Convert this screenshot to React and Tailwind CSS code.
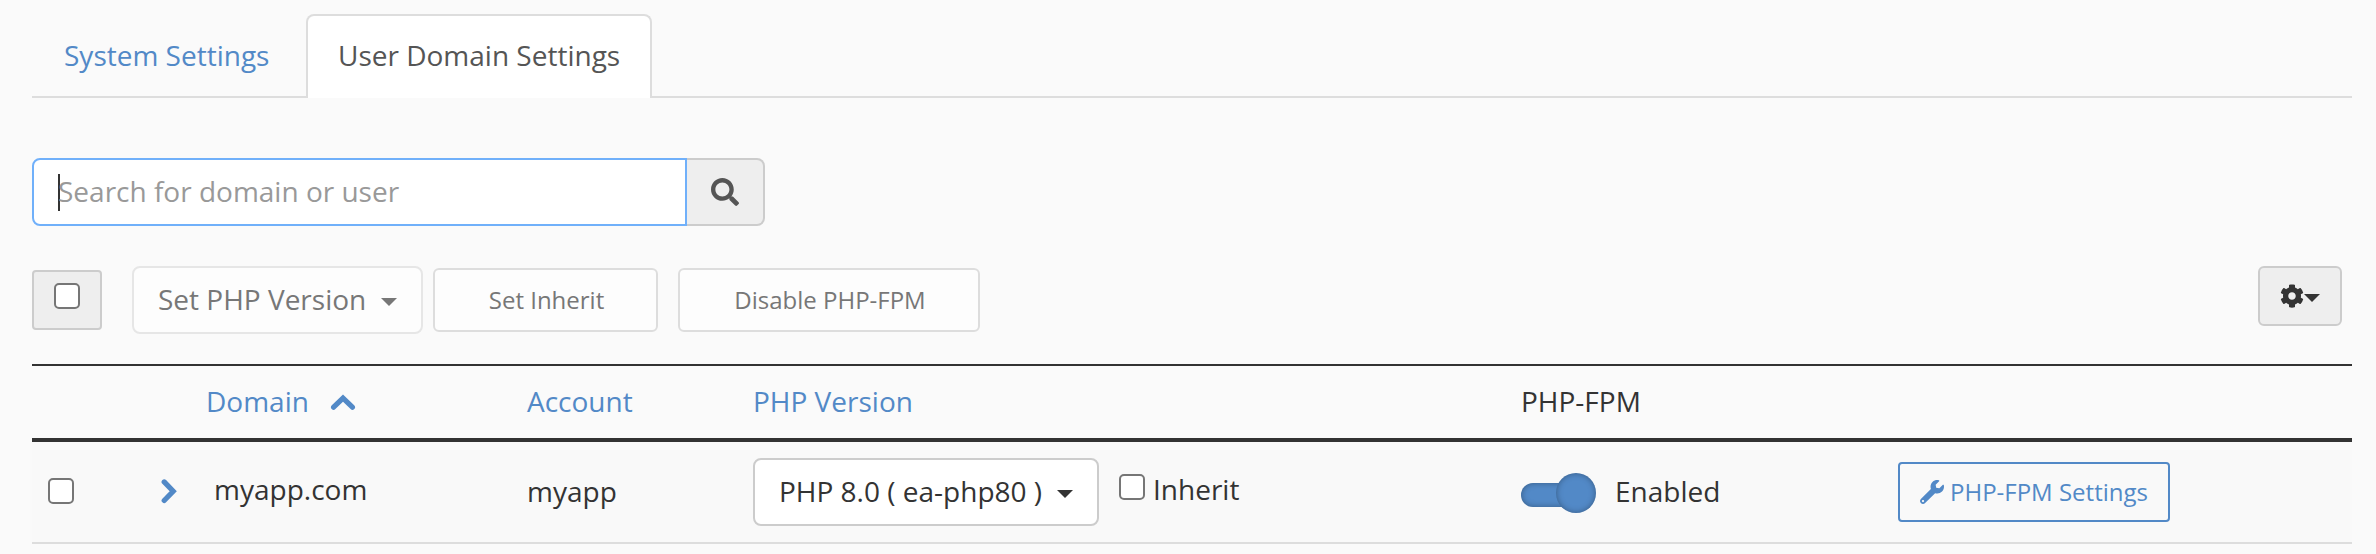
import { FaSearch, FaCog, FaWrench } from "react-icons/fa";

function Caret({ className = "" }) {
  return <span className={"block h-0 w-0 border-x-8 border-t-8 border-x-transparent border-t-current " + className} />;
}

function Box({ className = "" }) {
  return <span role="checkbox" aria-checked="false" className={"block size-[26px] shrink-0 rounded-[5px] border-2 border-[#767676] bg-white " + className} />;
}

function Tabs() {
  return (
    <nav className="flex h-[84px] shadow-[inset_0_-2px_0_#dddddd]">
      <a className="w-[274px] pl-8 pt-[21px] leading-10 text-[#5289c7]">System Settings</a>
      <a className="w-[346px] rounded-t-lg border-2 border-b-0 border-[#dddddd] bg-white pl-[30px] pt-[19px] leading-10 text-[#555555]">
        User Domain Settings
      </a>
    </nav>
  );
}

function Search() {
  return (
    <div className="mt-[60px] flex h-[68px]">
      <div className="flex w-[655px] items-center rounded-l-lg border-2 border-[#70b0fa] bg-white pl-6 text-[#999999]">
        <span className="-mr-0.5 h-[37px] w-0.5 bg-[#333333]" />
        <span className="pb-0.5 leading-10">Search for domain or user</span>
      </div>
      <button className="flex w-[78px] items-center justify-center rounded-r-lg border-2 border-l-0 border-[#cccccc] bg-[#eeeeee] pb-px">
        <FaSearch className="size-7 text-[#555555]" />
      </button>
    </div>
  );
}

function Toolbar() {
  return (
    <div className="mt-10 flex h-[98px] items-start text-[#777777]">
      <div className="mt-1 flex h-[60px] w-[70px] justify-center rounded border-2 border-[#cccccc] bg-[#eeeeee] pt-[11px]">
        <Box />
      </div>
      <button className="ml-[30px] flex h-[68px] w-[291px] items-center rounded-lg border-2 border-[#e6e6e6] bg-[#fdfdfd] pb-0.5 pl-6 leading-10">
        Set PHP Version
        <Caret className="ml-[15px] mt-1.5" />
      </button>
      <button className="ml-[10px] mt-0.5 h-16 w-[225px] rounded-md border-2 border-[#dddddd] bg-[#fdfdfd] pl-0.5 text-2xl">Set Inherit</button>
      <button className="ml-5 mt-0.5 h-16 w-[302px] rounded-md border-2 border-[#dddddd] bg-[#fdfdfd] pl-0.5 text-2xl">Disable PHP-FPM</button>
      <button className="ml-auto mr-[10px] flex h-[60px] w-[84px] items-center rounded-md border-2 border-[#cccccc] bg-[#eeeeee] pl-5 text-[#333333]">
        <FaCog className="size-6" />
        <Caret className="mt-[3px]" />
      </button>
    </div>
  );
}

const columns = "grid grid-cols-[174px_321px_226px_768px_377px_1fr]";

function Table() {
  return (
    <div className="text-[#333333]">
      <div className={columns + " h-[78px] border-b-4 border-t-2 border-[#333333] pt-[15px] leading-10 text-[#5289c7]"}>
        <span />
        <span className="flex">
          Domain
          <svg viewBox="0 0 26 18" className="ml-[21px] mt-[13px] h-[18px] w-[26px]" fill="none" stroke="currentColor" strokeWidth="5.2" strokeLinecap="round">
            <path d="M3.6 13.2 13 4.2l9.4 9" />
          </svg>
        </span>
        <span>Account</span>
        <span>PHP Version</span>
        <span className="text-[#333333]">PHP-FPM</span>
        <span />
      </div>
      <div className={columns + " h-[102px] border-b-2 border-[#dddddd] bg-[#f9f9f9] leading-10"}>
        <div className="flex pl-4">
          <Box className="mt-9" />
          <svg viewBox="0 0 18 26" className="ml-[86px] mt-[36px] h-[26px] w-[18px]" fill="none" stroke="currentColor" strokeWidth="5.2" strokeLinecap="round">
            <path className="text-[#5289c7]" stroke="#5289c7" d="M4.2 3.9 13.2 13.2l-9 9.3" />
          </svg>
        </div>
        <span className="pl-2 pt-[27px]">myapp.com</span>
        <span className="pt-[29px]">myapp</span>
        <div className="flex pt-4">
          <button className="flex h-[68px] w-[346px] items-center rounded-lg border-2 border-[#cccccc] bg-white pb-0.5 pl-6">
            PHP 8.0 ( ea-php80 )
            <Caret className="ml-[15px] mt-1.5" />
          </button>
          <Box className="ml-5 mt-4" />
          <span className="ml-2 mt-[11px]">Inherit</span>
        </div>
        <div className="flex">
          <div className="mt-[31px] flex h-10 w-[75px] items-center">
            <span className="mt-1 h-6 w-[55px] rounded-full bg-[#5289c7] shadow-[inset_0_0_6px_rgba(0,0,0,0.35)]" />
            <span className="-ml-5 size-10 shrink-0 rounded-full bg-[#5289c7] shadow-[inset_0_0_6px_rgba(0,0,0,0.35)]" />
          </div>
          <span className="ml-[19px] mt-[29px]">Enabled</span>
        </div>
        <button className="mt-5 flex h-[60px] w-[272px] items-center rounded border-2 border-[#5289c7] pl-5 text-2xl text-[#5289c7]">
          <FaWrench className="mr-1.5 size-6" />
          PHP-FPM Settings
        </button>
      </div>
    </div>
  );
}

export default function App() {
  return (
    <main className="h-[554px] overflow-hidden bg-[#fafafa] pl-8 pr-6 pt-[14px] font-['Open_Sans',sans-serif] text-[28px]">
      <Tabs />
      <Search />
      <Toolbar />
      <Table />
    </main>
  );
}
